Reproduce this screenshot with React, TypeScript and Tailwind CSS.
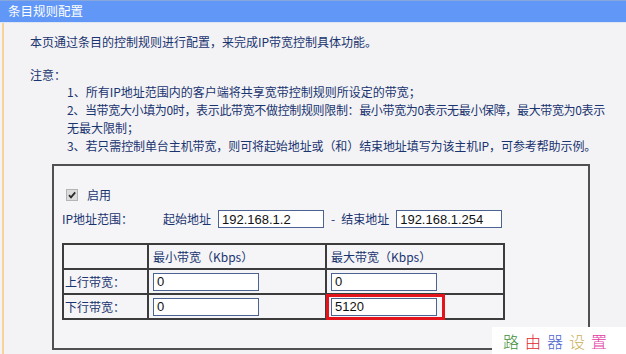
import React from "react";

const cjk = { fontFamily: '"Noto Sans CJK SC", "Liberation Sans", sans-serif' };
const arial = { fontFamily: '"Liberation Sans", Arial, sans-serif' };

function Field({ value, w = 106 }: { value: string; w?: number }) {
  return (
    <div
      className="h-[18px] bg-white border border-[#4a6393] flex items-center pl-[3px] text-[13px] text-[#111] leading-none"
      style={{ ...arial, width: w }}
    >
      {value}
    </div>
  );
}

export default function App() {
  return (
    <div
      className="w-[626px] h-[354px] relative overflow-hidden bg-[#f3f3f5] text-[12px] text-[#1a3470]"
      style={cjk}
    >
      {/* title bar */}
      <div className="h-[23px] bg-[#6198f8] border-t border-[#86a6dc] border-b border-b-[#dfe6f3] flex items-center pl-[8px] text-white text-[12.5px]">
        条目规则配置
      </div>

      {/* body */}
      <div className="ml-[2px] h-[331px] border-l-2 border-[#f8d49c]">
        <div className="pt-[10px] pl-[26px] leading-[18px]">
          本页通过条目的控制规则进行配置，来完成IP带宽控制具体功能。
        </div>
        <div className="mt-[16px] pl-[26px] leading-[16px] h-[16px]">注意：</div>
        <div className="pl-[63px] leading-[18px]">
          <div>1、所有IP地址范围内的客户端将共享宽带控制规则所设定的带宽；</div>
          <div className="tracking-[-0.35px]">
            2、当带宽大小填为0时，表示此带宽不做控制规则限制：最小带宽为0表示无最小保障，最大带宽为0表示
          </div>
          <div>无最大限制；</div>
          <div className="tracking-[-0.1px]">
            3、若只需控制单台主机带宽，则可将起始地址或（和）结束地址填写为该主机IP，可参考帮助示例。
          </div>
        </div>

        {/* box */}
        <div className="mt-[9px] ml-[48px] w-[538px] h-[186px] border-2 border-[#505050] bg-[#f5f5f7]">
          <div className="pt-[20px] pl-[12px] h-[38px] flex items-center gap-[9px]">
            <span className="w-[12px] h-[12px] bg-[#dcdcdc] border border-[#b4b4b4] flex items-center justify-center">
              <svg width="10" height="10" viewBox="0 0 10 10">
                <path d="M2 5.2 L4 7.3 L8.2 2.4" fill="none" stroke="#2a2a2a" strokeWidth="1.8" />
              </svg>
            </span>
            <span>启用</span>
          </div>
          <div className="mt-[6px] pl-[8px] h-[18px] flex items-center">
            <span className="w-[101px]">IP地址范围：</span>
            <span className="w-[48px]">起始地址</span>
            <span className="ml-[7px]">
              <Field value="192.168.1.2" />
            </span>
            <span className="ml-[7px]">-</span>
            <span className="ml-[6px] w-[48px]">结束地址</span>
            <span className="ml-[7px]">
              <Field value="192.168.1.254" />
            </span>
          </div>

          {/* table */}
          <div className="mt-[15px] ml-[8px] w-[443px] border-t-2 border-l-2 border-[#3c3c3c]">
            <div className="flex">
              <div className="w-[85px] h-[25px] border-r-2 border-b-2 border-[#3c3c3c]" />
              <div className="w-[178px] h-[25px] border-r-2 border-b-2 border-[#3c3c3c] flex items-center pl-[4px]">
                最小带宽（Kbps）
              </div>
              <div className="w-[178px] h-[25px] border-r-2 border-b-2 border-[#3c3c3c] flex items-center pl-[4px]">
                最大带宽（Kbps）
              </div>
            </div>
            <div className="flex">
              <div className="w-[85px] h-[25px] border-r-2 border-b-2 border-[#3c3c3c] flex items-center pl-[1px]">
                上行带宽：
              </div>
              <div className="w-[178px] h-[25px] border-r-2 border-b-2 border-[#3c3c3c] flex items-center pl-[4px]">
                <Field value="0" />
              </div>
              <div className="w-[178px] h-[25px] border-r-2 border-b-2 border-[#3c3c3c] flex items-center pl-[4px]">
                <Field value="0" />
              </div>
            </div>
            <div className="flex">
              <div className="w-[85px] h-[25px] border-r-2 border-b-2 border-[#3c3c3c] flex items-center pl-[1px]">
                下行带宽：
              </div>
              <div className="w-[178px] h-[25px] border-r-2 border-b-2 border-[#3c3c3c] flex items-center pl-[4px]">
                <Field value="0" />
              </div>
              <div className="relative w-[178px] h-[25px] border-r-2 border-b-2 border-[#3c3c3c] flex items-center pl-[4px]">
                <Field value="5120" />
                <div className="absolute left-[-1px] top-[-1px] w-[119px] h-[26px] border-[3px] border-[#e3141b]" />
              </div>
            </div>
          </div>
        </div>
      </div>

      {/* watermark */}
      <div className="absolute right-0 bottom-0 w-[134px] h-[27px] bg-white flex items-center pl-[11px] gap-[6px] text-[16px] font-light leading-none">
        <span className="text-[#3f8f3a]">路</span>
        <span className="text-[#e1262b]">由</span>
        <span className="text-[#4f67cf]">器</span>
        <span className="text-[#c9b15c]">设</span>
        <span className="text-[#e23aa3]">置</span>
      </div>
    </div>
  );
}
